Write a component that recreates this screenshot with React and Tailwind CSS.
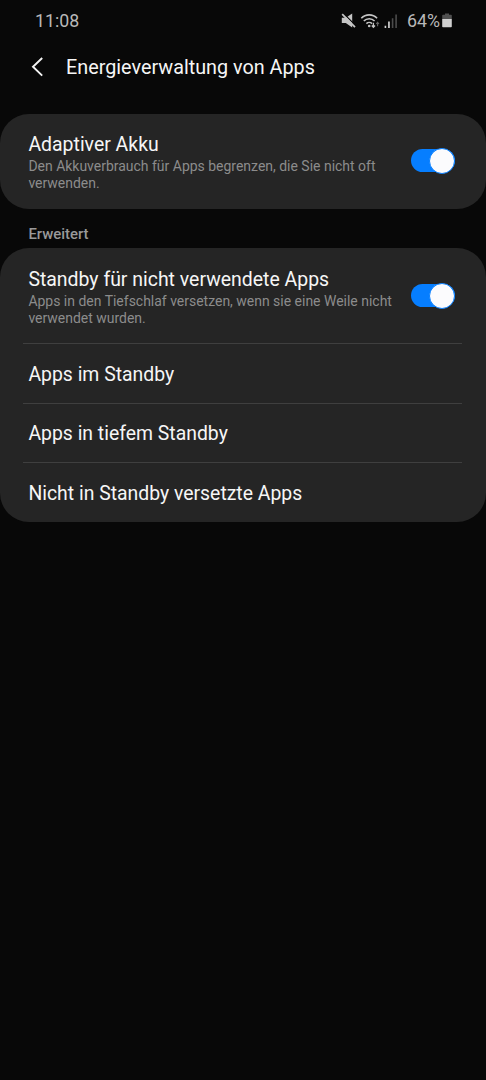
const StatusIcons = () => {
  return (
    <svg width="64" height="20" viewBox="340 10 64 20" fill="none" className="mr-[3px]">
      {/* Muted speaker */}
      <path d="M341.8 16.8h4l6.4-4.2v14l-6.4-4.6h-4z" fill="#c4c4c4" />
      <path d="M343.8 12.6l12.6 12.8" stroke="#080808" strokeWidth="1.3" />
      <path d="M342.2 13.2l12.8 13" stroke="#c4c4c4" strokeWidth="1.8" />
      {/* Wi-Fi */}
      <g stroke="#c4c4c4" strokeWidth="1.6">
        <path d="M361.3 17.2a11 11 0 0 1 15.8 0" />
        <path d="M363.8 20a7.5 7.5 0 0 1 10.8 0" />
        <path d="M366.4 22.6a4 4 0 0 1 5.6 0" />
      </g>
      <circle cx="369.2" cy="25" r="1.3" fill="#c4c4c4" />
      <path d="M373.4 21.7v4.4M371.8 24.5l1.6 1.8 1.6-1.8" stroke="#c4c4c4" strokeWidth="1.3" />
      <path d="M377.6 25.2v-4M376.2 23l1.4-1.6 1.4 1.6" stroke="#666666" strokeWidth="1.1" />
      {/* Signal strength */}
      <path d="M384.6 24.8h1.6v2.2h-1.6zM388.1 20.6h1.7v6.4h-1.7z" fill="#d0d0d0" />
      <path d="M391.8 17.3h1.6v9.7h-1.6zM395.3 13.6h1.6v13.4h-1.6z" fill="#4c4c4c" />
    </svg>
  );
};

const BatteryIcon = () => {
  return (
    <svg width="10" height="15" viewBox="0 0 10 15" className="ml-0.5">
      <path d="M3 .5h4v1.3h2a.8.8 0 0 1 .8.8V6H.2V2.6a.8.8 0 0 1 .8-.8h2z" fill="#505050" />
      <path d="M.2 6h9.6v7.4a.8.8 0 0 1-.8.8H1a.8.8 0 0 1-.8-.8z" fill="#d0d0d0" />
    </svg>
  );
};

const BackIcon = () => {
  return (
    <svg width="12" height="20" viewBox="0 0 12 20" fill="none" stroke="#f4f4f4" strokeWidth="1.9">
      <path d="M11.2 1L2 9.8l9.2 8.8" />
    </svg>
  );
};

const Toggle = ({ label }) => {
  return (
    <button
      type="button"
      role="switch"
      aria-checked="true"
      aria-label={label}
      className="flex h-[23px] w-[43.5px] shrink-0 items-center justify-end rounded-full bg-[#067eff]">
      <span className="h-[26px] w-[26px] shrink-0 rounded-full border border-[#067eff] bg-[#fbfbfd]" />
    </button>
  );
};

const SwitchRow = ({ title, description, className }) => {
  return (
    <div className={`flex items-start justify-between pr-[31.5px] pl-[28.4px] ${className}`}>
      <div className="w-[370px]">
        <div className="text-[19.45px] leading-6 text-[#f6f6f6]">{title}</div>
        <div className="mt-px text-[13.97px] leading-[17px] text-[#8c8c8c]">{description}</div>
      </div>
      <div className="pt-4">
        <Toggle label={title} />
      </div>
    </div>
  );
};

const links = ["Apps im Standby", "Apps in tiefem Standby", "Nicht in Standby versetzte Apps"];

export default function App() {
  return (
    <div className="min-h-screen w-full bg-[#080808] font-['Roboto',sans-serif]">
      <div className="flex h-[41px] items-center justify-between pr-[34px] pl-[35px] text-[17.8px] text-[#b8b8b8]">
        <span className="pt-0.5">11:08</span>
        <div className="flex items-center">
          <StatusIcons />
          <span className="pt-0.5">64%</span>
          <BatteryIcon />
        </div>
      </div>

      <header className="flex h-[73px] items-start pt-[15px] pl-[31px]">
        <div className="flex h-[22px] items-center">
          <BackIcon />
        </div>
        <h1 className="ml-[23px] text-[19.8px] leading-6 text-[#f6f6f6]">
          Energieverwaltung von Apps
        </h1>
      </header>

      <section className="h-[94.7px] rounded-[29px] bg-[#252525]">
        <SwitchRow
          title="Adaptiver Akku"
          description="Den Akkuverbrauch für Apps begrenzen, die Sie nicht oft verwenden."
          className="pt-[19px]"
        />
      </section>

      <h2 className="flex h-[39.8px] items-center pt-3 pl-[28.4px] text-[14.9px] font-medium text-[#999999]">
        Erweitert
      </h2>

      <section className="rounded-[29px] bg-[#252525]">
        <SwitchRow
          title="Standby für nicht verwendete Apps"
          description="Apps in den Tiefschlaf versetzen, wenn sie eine Weile nicht verwendet wurden."
          className="h-[95px] pt-5"
        />
        {links.map((link) => (
          <div key={link} className="mr-6 ml-[23px] border-t-[1.5px] border-[#3f3f3f] pl-[5.4px]">
            <div className="flex h-[58.4px] items-center pt-[1.5px] text-[19.4px] text-[#f6f6f6]">
              {link}
            </div>
          </div>
        ))}
      </section>
    </div>
  );
}
